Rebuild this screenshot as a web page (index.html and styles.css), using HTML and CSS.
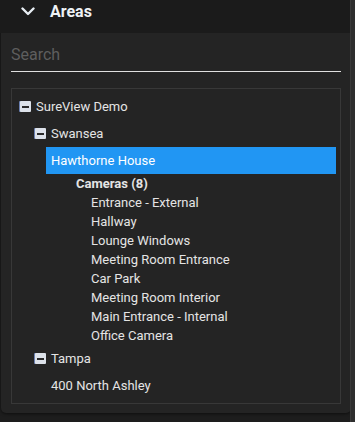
FILE: index.html
```html
<!DOCTYPE html>
<html lang="en">
<head>
    <meta charset="UTF-8">
    <meta name="viewport" content="width=device-width, initial-scale=1.0">
    <title>Areas</title>
    <link rel="stylesheet" href="styles.css">
</head>
<body>

<div class="panel">
    <div class="panel-header">
        <svg class="chevron" width="14" height="9" viewBox="0 0 14 9">
            <path d="M1.5 1.5 L7 7 L12.5 1.5" fill="none" stroke="#e8eef4" stroke-width="2.4" stroke-linecap="round" stroke-linejoin="round"/>
        </svg>
        <h2>Areas</h2>
    </div>

    <div class="search">
        <input type="text" placeholder="Search">
    </div>

    <div class="tree">
        <ul class="level">
            <li>
                <div class="node"><span class="toggle"></span>SureView Demo</div>
                <ul class="level sub">
                    <li>
                        <div class="node"><span class="toggle"></span>Swansea</div>
                        <ul class="level">
                            <li>
                                <div class="node leaf selected">Hawthorne House</div>
                                <div class="group">Cameras (8)</div>
                                <ul class="cameras">
                                    <li>Entrance - External</li>
                                    <li>Hallway</li>
                                    <li>Lounge Windows</li>
                                    <li>Meeting Room Entrance</li>
                                    <li>Car Park</li>
                                    <li>Meeting Room Interior</li>
                                    <li>Main Entrance - Internal</li>
                                    <li>Office Camera</li>
                                </ul>
                            </li>
                        </ul>
                    </li>
                    <li>
                        <div class="node"><span class="toggle"></span>Tampa</div>
                        <ul class="level">
                            <li>
                                <div class="node leaf">400 North Ashley</div>
                            </li>
                        </ul>
                    </li>
                </ul>
            </li>
        </ul>
    </div>
</div>

<div class="scrollbar"></div>

</body>
</html>
```

FILE: styles.css
```css
body {
    margin: 0;
    background-color: #1d1d1d;
    font-family: Roboto, "Liberation Sans", sans-serif;
    color: #e4e4e4;
    width: 355px;
    height: 422px;
    overflow: hidden;
    position: relative;
}

.panel {
    width: 350px;
    margin-left: 1px;
    height: 413px;
    background-color: #242424;
    border-radius: 0 0 5px 5px;
    box-shadow: 0 1px 3px rgba(0, 0, 0, 0.5);
}

.panel-header {
    height: 23px;
    padding-bottom: 10px;
    margin-left: -1px;
    background-color: #1b1b1b;
    display: flex;
    align-items: center;
    padding-left: 21px;
}

.panel-header h2 {
    margin: 0 0 0 15px;
    font-size: 16px;
    font-weight: bold;
    color: #eef2f6;
}

.search {
    padding: 0 10px;
}

.search input {
    display: block;
    width: 100%;
    box-sizing: border-box;
    height: 39px;
    padding: 4px 0 0 0;
    background: transparent;
    border: none;
    border-bottom: 1px solid #e0e0e0;
    font-family: Roboto, "Liberation Sans", sans-serif;
    font-size: 16px;
    color: #e4e4e4;
    outline: none;
}

.search input::placeholder {
    color: #5e5e5e;
}

.tree {
    margin: 16px 10px 0 10px;
    border: 1px solid #383838;
    padding: 4px 4px 4px 8px;
    font-size: 13px;
}

.level,
.cameras {
    list-style: none;
    margin: 0;
    padding: 0;
}

.sub {
    padding-left: 15px;
}

.node {
    height: 27px;
    display: flex;
    align-items: center;
}

.toggle {
    width: 11px;
    height: 11px;
    margin-right: 5px;
    background-color: #dde2ea;
    border-radius: 1px;
    position: relative;
    box-shadow: -1px 0 0 #6a7fb0;
}

.toggle::after {
    content: "";
    position: absolute;
    left: 2px;
    right: 2px;
    top: 5px;
    height: 2px;
    background-color: #2a2a2a;
}

.leaf {
    margin-left: 11px;
    padding-left: 5px;
}

.selected {
    background-color: #2196f3;
    color: #ffffff;
}

.group {
    height: 19px;
    line-height: 19px;
    padding-left: 41px;
    font-weight: bold;
}

.cameras li {
    height: 19px;
    line-height: 19px;
    padding-left: 56px;
}

.scrollbar {
    position: absolute;
    top: 0;
    right: 0;
    width: 4px;
    height: 422px;
    background-color: #2e2e2e;
    border-left: 1px solid #3a3a3a;
}
```
